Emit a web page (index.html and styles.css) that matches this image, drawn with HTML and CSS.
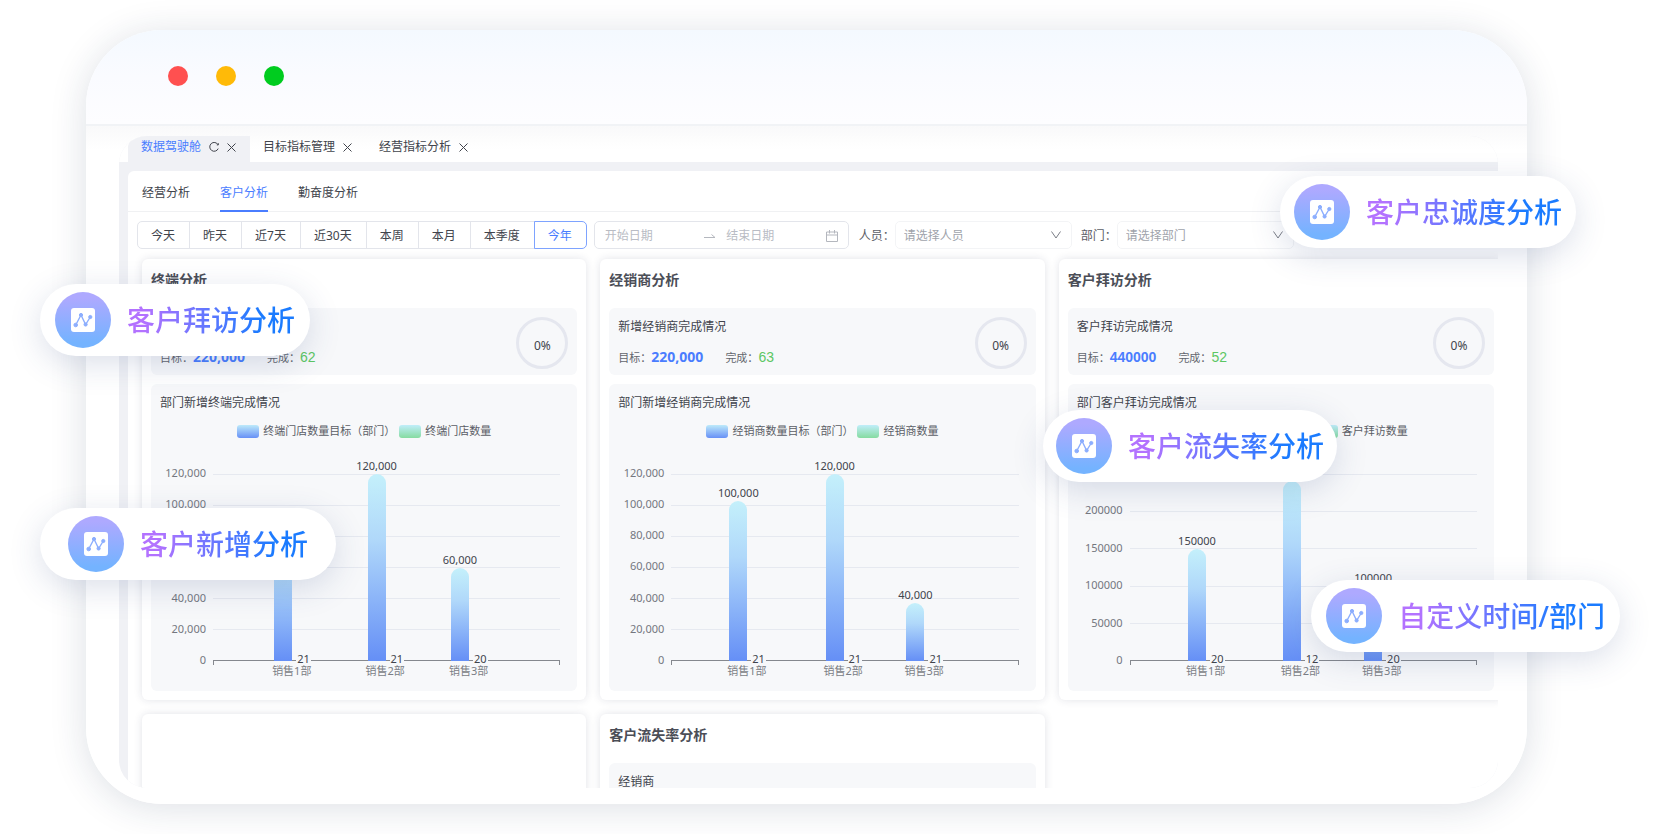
FILE: index.html
```html
<!DOCTYPE html>
<html lang="zh-CN">

<head>
    <meta charset="UTF-8">
    <meta name="viewport" content="width=device-width, initial-scale=1.0">
    <title>数据驾驶舱</title>
    <link rel="stylesheet" href="styles.css">
</head>

<body>

    <!-- shared icons -->
    <svg class="sprite" aria-hidden="true">
        <symbol id="icon-close" viewBox="0 0 9 9">
            <path d="M0.5 0.5L8.5 8.5M8.5 0.5L0.5 8.5" fill="none" stroke="currentColor" />
        </symbol>
        <symbol id="icon-reload" viewBox="0 0 10 10">
            <path d="M9 2.7A4.4 4.4 0 1 0 9.2 6.6M9.3 1.2V2.9H7.8" fill="none" stroke="currentColor" />
        </symbol>
        <symbol id="icon-down" viewBox="0 0 10 8">
            <path d="M0.5 0.5L5 7L9.5 0.5" fill="none" stroke="currentColor" />
        </symbol>
        <symbol id="icon-arrow" viewBox="0 0 12 6">
            <path d="M0 4.5H11L7.5 1.5" fill="none" stroke="currentColor" />
        </symbol>
        <symbol id="icon-calendar" viewBox="0 0 12 12">
            <path d="M0.5 2H11.5V11.5H0.5ZM0.5 5H11.5M3.5 0V3.5M8.5 0V3.5" fill="none" stroke="currentColor" />
        </symbol>
        <symbol id="icon-trend" viewBox="0 0 24 24">
            <rect width="24" height="24" rx="3" fill="#fff" />
            <g fill="#8caefe" stroke="#8caefe">
                <path d="M4.7 17L10 7L14.6 16.5L19.3 9" fill="none" stroke-width="1.4" />
                <circle cx="4.7" cy="17" r="1.8" />
                <circle cx="10" cy="7" r="1.6" />
                <circle cx="14.6" cy="16.5" r="1.6" />
                <circle cx="19.3" cy="9" r="1.6" />
            </g>
        </symbol>
    </svg>

    <div class="stage">
        <div class="window">
            <div class="window__bar">
                <span class="dot dot--red"></span>
                <span class="dot dot--yellow"></span>
                <span class="dot dot--green"></span>
            </div>

            <div class="window__body">
                <div class="screen">
                    <nav class="pages">
                        <div class="page page--active">
                            <a href="#">数据驾驶舱</a>
                            <button type="button" class="reload" aria-label="刷新"><svg width="10" height="10"><use href="#icon-reload" /></svg></button>
                            <button type="button" aria-label="关闭"><svg width="9" height="9"><use href="#icon-close" /></svg></button>
                        </div>
                        <div class="page">
                            <a href="#">目标指标管理</a>
                            <button type="button" aria-label="关闭"><svg width="9" height="9"><use href="#icon-close" /></svg></button>
                        </div>
                        <div class="page">
                            <a href="#">经营指标分析</a>
                            <button type="button" aria-label="关闭"><svg width="9" height="9"><use href="#icon-close" /></svg></button>
                        </div>
                    </nav>

                    <main class="panel">
                        <nav class="tabs">
                            <a class="tab" href="#">经营分析</a>
                            <a class="tab tab--active" href="#">客户分析</a>
                            <a class="tab" href="#">勤奋度分析</a>
                        </nav>

                        <form class="filters">
                            <div class="ranges">
                                <button type="button">今天</button>
                                <button type="button">昨天</button>
                                <button type="button">近7天</button>
                                <button type="button">近30天</button>
                                <button type="button">本周</button>
                                <button type="button">本月</button>
                                <button type="button">本季度</button>
                                <button type="button" class="active">今年</button>
                            </div>
                            <div class="dates">
                                <input type="text" placeholder="开始日期" aria-label="开始日期">
                                <svg width="12" height="6"><use href="#icon-arrow" /></svg>
                                <input type="text" placeholder="结束日期" aria-label="结束日期">
                                <svg width="12" height="12"><use href="#icon-calendar" /></svg>
                            </div>
                            <label for="person">人员：</label>
                            <div class="select">
                                <select id="person">
                                    <option>请选择人员</option>
                                </select>
                                <svg width="10" height="8"><use href="#icon-down" /></svg>
                            </div>
                            <label for="department">部门：</label>
                            <div class="select">
                                <select id="department">
                                    <option>请选择部门</option>
                                </select>
                                <svg width="10" height="8"><use href="#icon-down" /></svg>
                            </div>
                        </form>

                        <div class="cards">
                            <section class="card">
                                <h2>终端分析</h2>
                                <div class="box stat">
                                    <div>
                                        <h3>新增终端完成情况</h3>
                                        <p>目标：<b>220,000</b>完成：<i>62</i></p>
                                    </div>
                                    <span class="ring">0%</span>
                                </div>
                                <div class="box">
                                    <h3>部门新增终端完成情况</h3>
                                    <div class="legend">
                                        <span class="swatch"></span>终端门店数量目标（部门）
                                        <span class="swatch swatch--green"></span>终端门店数量
                                    </div>
                                    <div class="chart">
                                        <div class="chart__scale">
                                            <span>120,000</span><span>100,000</span><span>80,000</span><span>60,000</span><span>40,000</span><span>20,000</span><span>0</span>
                                        </div>
                                        <div class="chart__plot">
                                            <hr><hr><hr><hr><hr><hr><hr>
                                            <div class="bar" style="left: 17.6%; height: 67%"><span class="bar__value">80,000</span><span class="bar__done">21</span><span class="bar__name">销售1部</span></div>
                                            <div class="bar" style="left: 44.5%; height: 100%"><span class="bar__value">120,000</span><span class="bar__done">21</span><span class="bar__name">销售2部</span></div>
                                            <div class="bar" style="left: 68.5%; height: 49.5%"><span class="bar__value">60,000</span><span class="bar__done">20</span><span class="bar__name">销售3部</span></div>
                                        </div>
                                    </div>
                                </div>
                            </section>

                            <section class="card">
                                <h2>经销商分析</h2>
                                <div class="box stat">
                                    <div>
                                        <h3>新增经销商完成情况</h3>
                                        <p>目标：<b>220,000</b>完成：<i>63</i></p>
                                    </div>
                                    <span class="ring">0%</span>
                                </div>
                                <div class="box">
                                    <h3>部门新增经销商完成情况</h3>
                                    <div class="legend">
                                        <span class="swatch"></span>经销商数量目标（部门）
                                        <span class="swatch swatch--green"></span>经销商数量
                                    </div>
                                    <div class="chart">
                                        <div class="chart__scale">
                                            <span>120,000</span><span>100,000</span><span>80,000</span><span>60,000</span><span>40,000</span><span>20,000</span><span>0</span>
                                        </div>
                                        <div class="chart__plot">
                                            <hr><hr><hr><hr><hr><hr><hr>
                                            <div class="bar" style="left: 16.7%; height: 85.5%"><span class="bar__value">100,000</span><span class="bar__done">21</span><span class="bar__name">销售1部</span></div>
                                            <div class="bar" style="left: 44.4%; height: 100%"><span class="bar__value">120,000</span><span class="bar__done">21</span><span class="bar__name">销售2部</span></div>
                                            <div class="bar" style="left: 67.7%; height: 31%"><span class="bar__value">40,000</span><span class="bar__done">21</span><span class="bar__name">销售3部</span></div>
                                        </div>
                                    </div>
                                </div>
                            </section>

                            <section class="card">
                                <h2>客户拜访分析</h2>
                                <div class="box stat">
                                    <div>
                                        <h3>客户拜访完成情况</h3>
                                        <p>目标：<b class="plain">440000</b>完成：<i>52</i></p>
                                    </div>
                                    <span class="ring">0%</span>
                                </div>
                                <div class="box">
                                    <h3>部门客户拜访完成情况</h3>
                                    <div class="legend">
                                        <span class="swatch"></span>客户拜访数量目标（部门）
                                        <span class="swatch swatch--green"></span>客户拜访数量
                                    </div>
                                    <div class="chart">
                                        <div class="chart__scale">
                                            <span>250000</span><span>200000</span><span>150000</span><span>100000</span><span>50000</span><span>0</span>
                                        </div>
                                        <div class="chart__plot">
                                            <hr><hr><hr><hr><hr><hr>
                                            <div class="bar" style="left: 16.8%; height: 59.7%"><span class="bar__value">150000</span><span class="bar__done">20</span><span class="bar__name">销售1部</span></div>
                                            <div class="bar" style="left: 44.1%; height: 96.2%"><span class="bar__value">240000</span><span class="bar__done">12</span><span class="bar__name">销售2部</span></div>
                                            <div class="bar" style="left: 67.5%; height: 40%"><span class="bar__value">100000</span><span class="bar__done">20</span><span class="bar__name">销售3部</span></div>
                                        </div>
                                    </div>
                                </div>
                            </section>

                            <section class="card"></section>

                            <section class="card">
                                <h2>客户流失率分析</h2>
                                <div class="box">
                                    <h3>经销商</h3>
                                </div>
                            </section>
                        </div>
                    </main>
                </div>
            </div>
        </div>

        <!-- feature labels floating over the window -->
        <div class="pill pill--visit">
            <span class="pill__icon"><svg width="24" height="24"><use href="#icon-trend" /></svg></span>
            <span class="pill__text">客户拜访分析</span>
        </div>
        <div class="pill pill--new">
            <span class="pill__icon"><svg width="24" height="24"><use href="#icon-trend" /></svg></span>
            <span class="pill__text">客户新增分析</span>
        </div>
        <div class="pill pill--loyalty">
            <span class="pill__icon"><svg width="24" height="24"><use href="#icon-trend" /></svg></span>
            <span class="pill__text">客户忠诚度分析</span>
        </div>
        <div class="pill pill--churn">
            <span class="pill__icon"><svg width="24" height="24"><use href="#icon-trend" /></svg></span>
            <span class="pill__text">客户流失率分析</span>
        </div>
        <div class="pill pill--custom">
            <span class="pill__icon"><svg width="24" height="24"><use href="#icon-trend" /></svg></span>
            <span class="pill__text">自定义时间/部门</span>
        </div>
    </div>

</body>

</html>
```
FILE: styles.css
```css
* {
    box-sizing: border-box;
}

body {
    margin: 0;
    font-family: "Noto Sans", "Noto Sans CJK SC", sans-serif;
    font-size: 12px;
    line-height: 18px;
    color: #41444c;
    background: #fff;
}

a {
    color: inherit;
    text-decoration: none;
}

svg {
    display: block;
    flex: none;
}

button,
input,
select {
    font: inherit;
    color: inherit;
    background: none;
    border: 0;
    padding: 0;
}

h2,
h3,
p {
    margin: 0;
}

.sprite {
    position: absolute;
    width: 0;
    height: 0;
}

.stage {
    position: relative;
    height: 100vh;
    min-height: 700px;
    padding: 30px 134px 30px 86px;
    overflow: hidden;
}

/* Window frame */

.window {
    display: flex;
    flex-direction: column;
    height: 100%;
    border-radius: 76px;
    background: #fff;
    box-shadow: 0 4px 36px rgba(30, 45, 80, 0.15);
    overflow: hidden;
}

.window__bar {
    display: flex;
    flex: none;
    align-items: center;
    gap: 28px;
    height: 96px;
    padding: 0 82px 2px;
    background: linear-gradient(#f4f9ff, #fafbff 50%, #fdfdff);
    border-bottom: 2px solid #f1f3f6;
}

.dot {
    width: 20px;
    height: 20px;
    border-radius: 50%;
}

.dot--red {
    background: #ff5050;
}

.dot--yellow {
    background: #ffba08;
}

.dot--green {
    background: #00cc1f;
}

.window__body {
    flex: 1;
    min-height: 0;
    padding: 10px 29px 16px 33px;
    background: linear-gradient(#f9f9fa, #fff 24px);
}

.screen {
    display: flex;
    flex-direction: column;
    height: 100%;
    border-radius: 28px;
    background: #f0f1f5;
    overflow: hidden;
}

/* Open pages */

.pages {
    display: flex;
    flex: none;
    height: 26px;
    padding-left: 9px;
    background: linear-gradient(#fcfcfc, #fff 14px);
}

.page {
    display: flex;
    align-items: center;
    gap: 8px;
    padding: 0 14px 4px 13px;
}

.page--active {
    background: #f0f1f5;
    border-top-left-radius: 12px;
}

.page--active a {
    color: #4a7dff;
}

/* Panel */

.panel {
    flex: 1;
    min-height: 0;
    margin: 9px 0 0 9px;
    border-radius: 6px 0 0 0;
    background: #fff;
}

.tabs {
    display: flex;
    gap: 30px;
    height: 41px;
    padding-left: 14px;
    border-bottom: 1px solid #f0f1f3;
}

.tab {
    height: 41px;
    line-height: 43px;
}

.tab--active {
    color: #4a7dff;
    border-bottom: 2px solid #4a7dff;
}

.filters {
    display: flex;
    align-items: center;
    padding: 9px 9px 10px;
}

.filters label {
    padding-top: 1px;
    color: #5b5e66;
}

.ranges {
    display: flex;
    margin-right: 8px;
}

.ranges button {
    height: 28px;
    margin-right: -1px;
    padding: 1px 14px 0 13px;
    border: 1px solid #e3e5eb;
    white-space: nowrap;
}

.ranges button:first-child {
    border-radius: 5px 0 0 5px;
}

.ranges button:last-child {
    border-radius: 0 5px 5px 0;
}

.ranges .active {
    position: relative;
    color: #4a7dff;
    border-color: #7ea3ff;
}

.dates {
    display: flex;
    align-items: center;
    gap: 10px;
    width: 255px;
    height: 28px;
    margin-right: 10px;
    padding: 1px 10px 0;
    border: 1px solid #e3e5eb;
    border-radius: 5px;
    color: #b4b7be;
}

.dates input {
    flex: 1;
    min-width: 0;
}

.dates input::placeholder {
    color: #b9bcc4;
}

.select {
    position: relative;
    width: 177px;
    margin-right: 9px;
}

.select select {
    appearance: none;
    width: 100%;
    height: 28px;
    padding: 1px 8px 0;
    border: 1px solid #f3f4f6;
    border-radius: 5px;
    color: #a0a3ab;
}

.select svg {
    position: absolute;
    top: 10px;
    right: 11px;
    color: #7a7d85;
    pointer-events: none;
}

/* Cards */

/* the last column runs a little past the screen edge */
.cards {
    display: grid;
    grid-template-columns: repeat(3, 1fr);
    gap: 14px;
    margin: 0 -5px 0 14px;
}

.card {
    padding: 10px 9px 9px;
    border-radius: 6px;
    background: #fff;
    box-shadow: 0 0 8px rgba(30, 40, 80, 0.13);
}

.card h2 {
    height: 39px;
    font-size: 14px;
    line-height: 22px;
    color: #4b4e57;
}

.box {
    padding: 10px 9px 9px;
    border-radius: 6px;
    background: #f7f8fa;
}

.box + .box {
    margin-top: 9px;
}

.box h3 {
    font-size: 12px;
    font-weight: 400;
}

.stat {
    display: flex;
    align-items: center;
    justify-content: space-between;
    height: 67px;
    padding-bottom: 8px;
}

.stat p {
    margin-top: 12px;
    font-size: 11px;
    color: #63666e;
}

.stat b {
    margin-right: 22px;
    font-size: 14px;
    color: #4a7dff;
}

.stat .plain {
    font-family: "Liberation Sans", sans-serif;
}

.stat i {
    font-family: "Liberation Sans", sans-serif;
    font-size: 14px;
    font-style: normal;
    color: #5cc763;
}

.ring {
    width: 52px;
    height: 52px;
    padding-top: 3px;
    border: 3px solid #e5e7ef;
    border-radius: 50%;
    line-height: 46px;
    text-align: center;
}

/* Charts */

.legend {
    display: flex;
    align-items: center;
    justify-content: center;
    gap: 4px;
    margin-top: 10px;
    font-size: 11px;
    white-space: nowrap;
    color: #5b5e66;
}

.swatch {
    width: 22px;
    height: 13px;
    border-radius: 3px;
    background: linear-gradient(#bdeafa, #6790f6);
}

.swatch--green {
    background: linear-gradient(#c0eefa, #86dba0);
}

.chart {
    display: flex;
    gap: 7px;
    height: 187px;
    margin: 34px 8px 21px 0;
    font-size: 11px;
    line-height: 14px;
}

.chart__scale {
    display: flex;
    flex-direction: column;
    justify-content: space-between;
    width: 46px;
    margin: -8px 0 -6px;
    text-align: right;
    color: #74777f;
}

.chart__plot {
    position: relative;
    display: flex;
    flex: 1;
    flex-direction: column;
    justify-content: space-between;
}

.chart__plot hr {
    width: 100%;
    height: 1px;
    margin: 0;
    border: 0;
    background: #e6e9f0;
}

/* zero line with a tick at each end */
.chart__plot hr:last-of-type {
    height: 5px;
    margin-bottom: -4px;
    border: solid #85888e;
    border-width: 1px 1px 0;
    background: none;
}

.bar {
    position: absolute;
    bottom: 0;
    width: 18px;
    border-radius: 9px 9px 0 0;
    background: linear-gradient(#c4f0fb, #b0d8fa 35%, #658ff6);
}

.bar span {
    position: absolute;
    white-space: nowrap;
}

.bar__value {
    bottom: 100%;
    left: 50%;
    margin-bottom: 1px;
    transform: translateX(-50%);
}

.bar__done {
    bottom: -5px;
    left: 22px;
    padding: 0 1px;
    background: #f7f8fa;
}

.bar__name {
    top: 100%;
    left: -2px;
    margin-top: 3px;
    color: #7b7e85;
}

/* Floating labels */

.pill {
    position: absolute;
    display: flex;
    align-items: center;
    gap: 16px;
    height: 72px;
    padding: 0 14px;
    border-radius: 36px;
    background: #fff;
    box-shadow: 0 8px 32px rgba(50, 70, 130, 0.17);
}

.pill__icon {
    display: flex;
    align-items: center;
    justify-content: center;
    width: 56px;
    height: 56px;
    border-radius: 50%;
    background: linear-gradient(#aea9ff 10%, #74b3ff 90%);
}

.pill__text {
    font-size: 28px;
    line-height: 40px;
    font-weight: 500;
    white-space: nowrap;
    color: transparent;
    background: linear-gradient(90deg, #b372ff 10%, #1a7bff 80%);
    -webkit-background-clip: text;
    background-clip: text;
}

.pill--visit {
    top: 284px;
    left: 40px;
    padding: 0 15px;
}

.pill--new {
    top: 508px;
    left: 40px;
    padding: 0 28px;
}

.pill--loyalty {
    top: 176px;
    right: 85px;
}

.pill--churn {
    top: 410px;
    right: 324px;
    padding: 0 13px;
}

.pill--custom {
    top: 580px;
    right: 41px;
    padding: 0 15px;
}
```
